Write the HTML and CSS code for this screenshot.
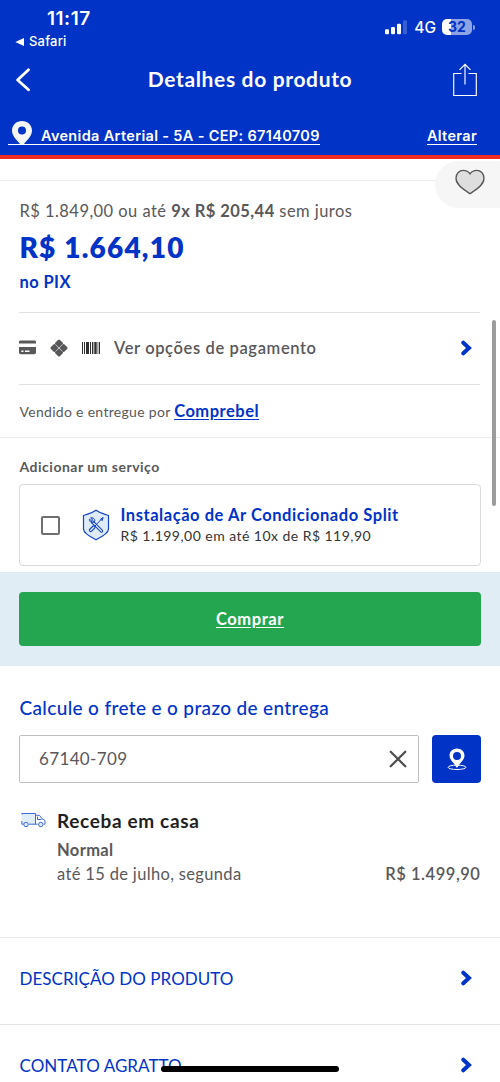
FILE: index.html
```html
<!DOCTYPE html>
<html lang="pt-BR">
<head>
<meta charset="utf-8">
<title>Detalhes do produto</title>
<link rel="stylesheet" href="styles.css">
</head>
<body>
<div class="screen">
  <header class="header">
    <div class="status">
      <div class="status-left">
        <div class="clock"><span>11:17</span></div>
        <div class="back-app"><svg width="9" height="8" viewBox="0 0 9 8"><path d="M9 0v8L.3 4z" fill="#fff"/></svg><span>Safari</span></div>
      </div>
      <div class="status-right">
        <svg width="23" height="15" viewBox="0 0 23 15"><g fill="#fff"><rect x="0" y="9.3" width="4" height="5" rx="1.2"/><rect x="6" y="7" width="4" height="7.3" rx="1.2"/><rect x="12" y="3.7" width="4" height="10.6" rx="1.2"/><rect x="18" y=".2" width="4" height="14.1" rx="1.2" opacity=".22"/></g></svg>
        <span class="network">4G</span>
        <div class="battery"><span>32</span></div>
        <i class="battery-tip"></i>
      </div>
    </div>
    <nav class="nav">
      <svg width="16" height="24" viewBox="0 0 16 24"><path d="M13.500 1.700 2.600 12l10.900 9.700" fill="none" stroke="#fff" stroke-width="2.800" stroke-linecap="round" stroke-linejoin="round"/></svg>
      <h1 class="title"><span>Detalhes do produto</span></h1>
      <svg width="24" height="34" viewBox="0 0 24 34"><path d="M8.500 10.500H.7v22h22.600v-22h-7.800M12 21.500V1.500M6.500 6.800 12 1.300l5.500 5.500" fill="none" stroke="#fff" stroke-width="1.150"/></svg>
    </nav>
    <div class="address">
      <a class="address-link"><svg width="21" height="24" viewBox="0 0 21 24"><path fill="#f5f5f5" fill-rule="evenodd" d="M10 0C4.300 0 0 4.200 0 9.500c0 5.300 4.500 9.300 8 13.400.7.900 3.200.9 4 0 3.500-4.100 8-8.100 8-13.400C20 4.200 15.700 0 10 0zm0 5.500a4 4 0 1 1 0 8 4 4 0 0 1 0-8z"/></svg><span class="address-text">Avenida Arterial - 5A - CEP: 67140709</span></a>
      <a class="change"><span>Alterar</span></a>
    </div>
  </header>

  <main>
    <div class="gallery-end"></div>
    <section class="price">
      <p class="installments"><span>R$ 1.849,00 ou até <b>9x R$ 205,44</b> sem juros</span></p>
      <p class="amount"><span>R$ 1.664,10</span></p>
      <p class="pix"><span>no PIX</span></p>
    </section>

    <section class="payment">
      <svg width="17" height="15" viewBox="0 0 17 15" fill="#58585a"><path d="M1.500.5h14a1.500 1.500 0 0 1 1.500 1.700V3.500H0V2.200A1.500 1.500 0 0 1 1.500.5z"/><path fill-rule="evenodd" d="M0 7h17v5.500a1.700 1.700 0 0 1-1.700 1.700H1.700A1.700 1.700 0 0 1 0 12.500zM2.300 10.500v1.500H4.500v-1.500zM6 10.500v1.500h4.500v-1.500z"/></svg>
      <svg class="pix-icon" width="18" height="18" viewBox="0 0 18 18"><g fill="#58585a"><rect x="5.750" y="1.250" width="6.500" height="6.500" rx="1.500" transform="rotate(45 9 4.500)"/><rect x="10.250" y="5.750" width="6.500" height="6.500" rx="1.500" transform="rotate(45 13.500 9)"/><rect x="5.750" y="10.250" width="6.500" height="6.500" rx="1.500" transform="rotate(45 9 13.500)"/><rect x="1.250" y="5.750" width="6.500" height="6.500" rx="1.500" transform="rotate(45 4.500 9)"/></g><path d="m5.700 5.700 6.600 6.600m0-6.600-6.600 6.600" stroke="#ddd" stroke-width=".7"/></svg>
      <svg class="barcode" width="18" height="12" viewBox="0 0 18 11" preserveAspectRatio="none"><path fill="#303030" d="M0 0h1v11H0zM2 0h1v11H2zM4 0h3v11H4zM8 0h1v11H8zM10 0h1.400v11H10zM12.300 0h2.400v11h-2.400zM15.600 0h.7v11h-.7zM17 0h1v11h-1z"/></svg>
      <span class="payment-text">Ver opções de pagamento</span>
      <svg class="chevron" width="11" height="16" viewBox="0 0 11 16"><path d="m2.300 2.700 5.700 5.300-5.700 5.300"/></svg>
    </section>

    <p class="seller"><span class="seller-text">Vendido e entregue por</span> <a class="seller-link">Comprebel</a></p>

    <section class="service">
      <h2 class="service-title"><span>Adicionar um serviço</span></h2>
      <div class="service-card">
        <i class="checkbox"></i>
        <svg width="28" height="32" viewBox="0 0 28 32"><path d="M14 1.300C9.500 4.600 5.500 5 1.500 6.500V20c0 4 8 8.500 12.500 10.700C18.500 28.500 26.500 24 26.500 20V6.500C22.500 5 18.500 4.600 14 1.300z" fill="#dfebf6" stroke="#1443cb" stroke-width="1.200"/><g fill="none" stroke="#1443cb" stroke-linecap="round"><path d="m10.500 13 9 9" stroke-width="3.200"/><path d="m10.500 13 9 9" stroke="#dfebf6" stroke-width="1.200"/><path d="M9 8.800c2.500-.6 4.500 1.700 3.500 4-1.500 1.500-5.300.7-5.200-2.500l2 1.200 1-1.300zM20 9.500l-7 7.500M20.800 8.700l-2.200 1.500 1.200 1.200z" stroke-width="1"/><path d="m11.700 18.200-3 3" stroke-width="3.800"/><path d="m11.700 18.200-3 3" stroke="#dfebf6" stroke-width="1.500"/></g></svg>
        <div class="service-info">
          <p class="service-name"><span>Instalação de Ar Condicionado Split</span></p>
          <p class="service-price"><span>R$ 1.199,00 em até 10x de R$ 119,90</span></p>
        </div>
      </div>
    </section>

    <div class="buy"><a class="buy-button"><span>Comprar</span></a></div>

    <section class="shipping">
      <h2 class="shipping-title"><span>Calcule o frete e o prazo de entrega</span></h2>
      <div class="zip">
        <div class="zip-field"><span>67140-709</span><svg width="18" height="18" viewBox="0 0 18 18"><path d="m1.700 1.700 14.600 14.600m0-14.600L1.700 16.300" stroke="#4c4c4c" stroke-width="2.200" stroke-linecap="round"/></svg></div>
        <a class="locate"><svg width="20" height="23" viewBox="0 0 20 23"><ellipse cx="10" cy="19.300" rx="8.900" ry="2.200" fill="none" stroke="#fff" stroke-width="1"/><path d="M10 .5c-4.300 0-7.500 3-7.500 7.200 0 4.300 4.500 6.800 6.700 11.300.3.700 1.300.7 1.600 0 2.200-4.500 6.700-7 6.700-11.300C17.500 3.500 14.300.5 10 .5zM10 4a4 4 0 1 1 0 8 4 4 0 0 1 0-8z" fill="#fff" fill-rule="evenodd"/></svg></a>
      </div>
      <div class="delivery">
        <svg width="25" height="16" viewBox="0 0 25 16"><g stroke="#3f6ad8" fill="#e0edf6"><path d="M.8 1.500h13.700v10.700H.8z" stroke="none"/><path d="M.8 1.500h13.700v10.700M.8 1.500v1M.8 9v3.200h2M7.500 12.200h9.200M14.500 3.300h4l2.500 3.500 3 1.700v3.700h-1.500M16.500 4.500v3h4" fill="none"/><circle cx="5" cy="12.500" r="2.200"/><circle cx="19.800" cy="12.500" r="2.200"/></g></svg>
        <div class="delivery-info">
          <h3 class="delivery-title"><span>Receba em casa</span></h3>
          <p class="delivery-kind"><span>Normal</span></p>
          <p class="delivery-row"><span class="delivery-date">até 15 de julho, segunda</span><span class="delivery-cost">R$ 1.499,90</span></p>
        </div>
      </div>
    </section>

    <a class="row"><span class="row-desc">DESCRIÇÃO DO PRODUTO</span><svg class="chevron" width="11" height="16" viewBox="0 0 11 16"><path d="m2.300 2.700 5.700 5.300-5.700 5.300"/></svg></a>
    <a class="row"><span class="row-contact">CONTATO AGRATTO</span><svg class="chevron" width="11" height="16" viewBox="0 0 11 16"><path d="m2.300 2.700 5.700 5.300-5.700 5.300"/></svg></a>
  </main>

  <div class="favorite"><svg width="30" height="26" viewBox="0 0 30 26"><path d="M15 24.700C10 21.500 1 16.500 1 9.300 1 4.500 4.300 1.300 8.300 1.300c3 0 5 1.200 6.700 3.500 1.700-2.300 3.700-3.500 6.700-3.500 4 0 7.300 3.200 7.300 8 0 7.200-9 12.200-14 15.400z" fill="#dedede" stroke="#555" stroke-width="1.300"/></svg></div>
  <div class="scrollbar"></div>
  <div class="home-bar"></div>
</div>
</body>
</html>
```
FILE: styles.css
```css
* { box-sizing: border-box; }
body, h1, h2, h3, p { margin: 0; }
body { font-family: Lato, "Open Sans", sans-serif; color: #58585a; background: #fff; }
svg { display: block; flex: none; }
.screen { position: relative; width: 500px; height: 1082px; overflow: hidden; background: #fff; }

.header { height: 159px; background: #0033c6; color: #fff; border-bottom: 4px solid #f12b24; font-family: Inter, sans-serif; }
.status { height: 50px; display: flex; justify-content: space-between; }
.status-left { padding: 8px 0 0 15px; }
.clock { padding-left: 32px; font-size: 19px; line-height: 22px; font-weight: 600; letter-spacing: .5px; }
.back-app { display: flex; align-items: center; gap: 5px; margin-top: 3px; font-size: 13px; line-height: 17px; font-weight: 500; letter-spacing: .2px; }
.status-right { display: flex; align-items: flex-start; padding: 20px 25px 0 0; }
.network { margin-left: 6px; font-size: 15.500px; line-height: 16px; font-weight: 500; }
.battery { margin-left: 6px; margin-top: -1px; width: 30px; height: 16px; border-radius: 5px; background: linear-gradient(90deg, #fff 9px, #8ca3e5 9px); color: #0033c6; font-size: 14px; line-height: 16px; font-weight: 700; text-align: center; }
.battery-tip { width: 2px; height: 5px; margin: 5px 0 0 1px; border-radius: 0 2px 2px 0; background: #8ca3e5; }
.nav { height: 60px; display: flex; align-items: center; justify-content: space-between; padding: 0 23px 0 15px; }
.title { margin: -2px 0 0 16px; font-family: Lato, sans-serif; font-size: 21px; line-height: 26px; font-weight: 700; letter-spacing: .65px; }
.address { display: flex; justify-content: space-between; padding: 11px 23px 0 8px; font-size: 14.500px; font-weight: 600; line-height: 18px; letter-spacing: .33px; }
.address-link { display: flex; gap: 8px; height: 24px; padding-left: 4px; border-bottom: 1.500px solid #fff; }
.address-text { padding-top: 6px; }
.change { height: 24px; padding-top: 6px; border-bottom: 1.500px solid #fff; }

.gallery-end { height: 22px; border-bottom: 1px solid #ececec; }
.price { height: 131px; padding: 19px 19.500px 0; }
.installments { font-size: 16.500px; line-height: 22px; letter-spacing: .45px; white-space: nowrap; }
.amount { margin-top: 5px; font-size: 28px; line-height: 40px; font-weight: 800; letter-spacing: 1.200px; color: #0033c6; }
.pix { margin-top: 5px; font-size: 16.500px; line-height: 20px; font-weight: 700; letter-spacing: .4px; color: #0033c6; }
.payment { height: 73px; margin: 0 20px 0 19px; padding-bottom: 2px; display: flex; align-items: center; border-top: 1px solid #e2e2e2; border-bottom: 1px solid #e2e2e2; }
.pix-icon { margin-left: 14px; }
.barcode { margin-left: 14px; }
.payment-text { margin: 0 auto 0 14px; font-size: 16.500px; line-height: 24px; font-weight: 600; letter-spacing: .62px; }
.chevron { fill: none; stroke: #0033c6; stroke-width: 4px; stroke-linecap: round; stroke-linejoin: miter; margin-right: 8px; }
.seller { height: 53px; padding: 0 19.500px; line-height: 52px; border-bottom: 1px solid #ececec; font-size: 14px; letter-spacing: .3px; white-space: nowrap; }
.seller-link { font-size: 16.500px; font-weight: 700; letter-spacing: .5px; color: #0033c6; text-decoration: underline; text-underline-offset: 2px; }
.service { height: 134px; padding: 19px 19.500px 0; }
.service-title { font-size: 14px; line-height: 20px; font-weight: 700; letter-spacing: .5px; }
.service-card { height: 82px; margin: 7px -.5px 0; display: flex; align-items: center; padding-left: 21px; border: 1px solid #dadada; border-radius: 4px; }
.checkbox { width: 19px; height: 19px; margin-right: 22px; border: 2px solid #6f6f6f; border-radius: 2px; }
.service-info { margin: 0 0 0 10.500px; }
.service-name { font-size: 16.500px; line-height: 22px; font-weight: 700; letter-spacing: .55px; color: #0033c6; }
.service-price { font-size: 14px; line-height: 20px; letter-spacing: .46px; color: #333; }
.buy { height: 94px; padding: 20px 19px; background: #e0edf5; }
.buy-button { display: block; height: 54px; border-radius: 4px; background: #24a650; color: #fff; font-size: 16.500px; line-height: 54px; font-weight: 700; letter-spacing: .6px; text-align: center; text-decoration: underline; text-underline-offset: 2px; }
.shipping { height: 271px; padding: 29px 19.500px 0; }
.shipping-title { font-size: 19px; line-height: 26px; font-weight: 500; letter-spacing: .35px; color: #0033c6; }
.zip { display: flex; gap: 13px; margin: 14px -.5px 0; }
.zip-field { width: 400px; height: 48px; display: flex; align-items: center; justify-content: space-between; padding: 0 11px 0 19px; border: 1px solid #bfbfbf; border-radius: 2px; font-size: 17px; letter-spacing: .35px; }
.zip-field span { padding-bottom: 1px; }
.locate { width: 49px; height: 48px; display: grid; place-items: center; border-radius: 4px; background: #0033c6; }
.delivery { display: flex; gap: 11px; margin-top: 25px; padding-left: 1.500px; }
.delivery svg { margin-top: 4px; }
.delivery-info { flex: 1; font-size: 16.500px; line-height: 24px; }
.delivery-title { font-size: 19px; line-height: 26px; font-weight: 700; letter-spacing: .65px; color: #1f1f1f; }
.delivery-kind { margin-top: 4px; font-weight: 700; letter-spacing: .35px; }
.delivery-row { display: flex; justify-content: space-between; letter-spacing: .34px; }
.delivery-cost { font-weight: 600; letter-spacing: .55px; }
.row { height: 87px; display: flex; align-items: center; justify-content: space-between; padding: 0 20px 6px 19.500px; border-top: 1px solid #e6e6e6; color: #0033c6; font-size: 17px; letter-spacing: .05px; }

.favorite { position: absolute; left: 435px; top: 161px; width: 85px; height: 47px; padding: 8px 20px; border-radius: 24px; background: #f6f6f6; }
.scrollbar { position: absolute; left: 492px; top: 320px; width: 4px; height: 186px; border-radius: 2px; background: #9c9c9c; }
.home-bar { position: absolute; left: 161px; top: 1066px; width: 178px; height: 6px; border-radius: 3px; background: #000; }
```
